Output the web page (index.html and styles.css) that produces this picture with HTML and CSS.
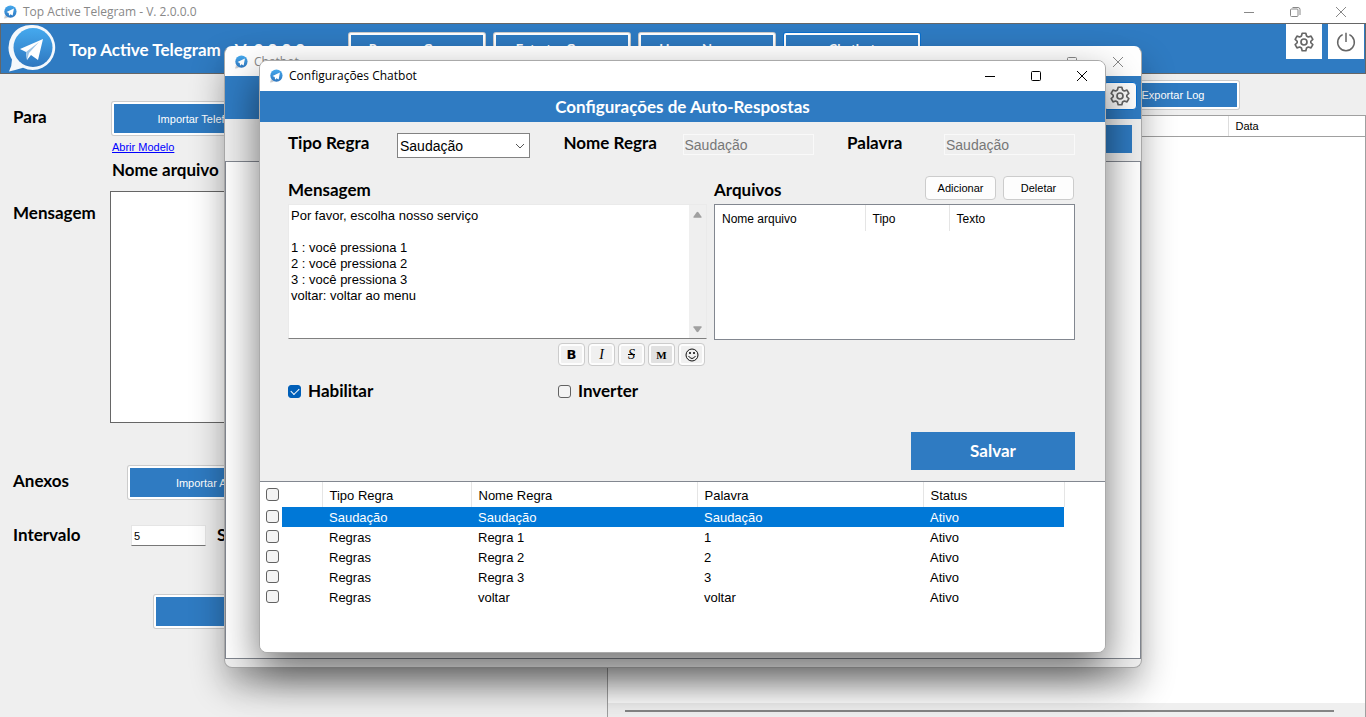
FILE: index.html
```html
<!DOCTYPE html>
<html lang="pt-BR">
<head>
	<meta charset="UTF-8">
	<title>Top Active Telegram</title>
	<link rel="stylesheet" href="styles.css">
</head>
<body>
<svg class="sprite" aria-hidden="true">
	<defs>
		<linearGradient id="sky" x1="0" y1="0" x2="0" y2="1">
			<stop offset="0" stop-color="#45a9ee"/>
			<stop offset="1" stop-color="#2f77bf"/>
		</linearGradient>
	</defs>
	<symbol id="logo" viewBox="0 0 48 48">
		<path d="M25 1a22.500 22.500 0 1 1-10 42.800Q8 46 1 47.500q3-6 3-12A22.500 22.500 0 0 1 25 1z" fill="#f4f8fc"/>
		<circle cx="25" cy="23.500" r="19.500" fill="url(#sky)"/>
		<path d="M35 15L12 25l6 3 1 8 4-5 7 5z" fill="#fff"/>
		<path d="M18 28l13-10-10 11-2 7z" fill="#9cc4e6"/>
	</symbol>
	<symbol id="smalllogo" viewBox="0 0 16 16">
		<path d="M1 15.500Q2.500 13 2 11.500l4 2.500Q4 15.500 1 15.500z" fill="#c9ccd0"/>
		<circle cx="8.500" cy="7.500" r="7" fill="url(#sky)"/>
		<path d="M12.500 4L4 8l2.500 1.200.5 3 1.500-1.700 2.500 1.500z" fill="#fff"/>
	</symbol>
	<symbol id="gear" viewBox="0 0 24 24">
		<path d="M9.800 1.500h4.400l.8 3.200 2.200 1.300 3.200-1 2.200 3.900-2.400 2.200v1.800l2.400 2.200-2.200 3.900-3.200-1-2.200 1.300-.8 3.200h-4.400L9 19.300 6.800 18l-3.200 1-2.200-3.900 2.400-2.200v-1.800L1.400 8.900 3.600 5l3.200 1L9 4.700z" fill="none" stroke="#666" stroke-width="2" stroke-linejoin="round"/>
		<circle cx="12" cy="12" r="3.600" fill="none" stroke="#666" stroke-width="2"/>
	</symbol>
	<symbol id="power" viewBox="0 0 24 24">
		<path d="M8 3.200a10 10 0 1 0 8 0M12 1v11" fill="none" stroke="#666" stroke-width="1.800"/>
	</symbol>
	<symbol id="min" viewBox="0 0 12 12"><path d="M1 6.500h10" fill="none" stroke="currentColor"/></symbol>
	<symbol id="max" viewBox="0 0 12 12"><rect x="1.500" y="1.500" width="9" height="9" rx="1" fill="none" stroke="currentColor"/></symbol>
	<symbol id="restore" viewBox="0 0 12 12"><path d="M1.500 4a1 1 0 0 1 1-1H8a1 1 0 0 1 1 1v5.500a1 1 0 0 1-1 1H2.500a1 1 0 0 1-1-1zM3.500 1.500H9a2 2 0 0 1 2 2V9" fill="none" stroke="currentColor"/></symbol>
	<symbol id="close" viewBox="0 0 12 12"><path d="M1 1l10 10M11 1L1 11" fill="none" stroke="currentColor"/></symbol>
</svg>

<!-- janela principal -->
<div class="main">
	<div class="titlebar inactive">
		<svg class="ico"><use href="#smalllogo"/></svg>
		<span class="caption">Top Active Telegram - V. 2.0.0.0</span>
		<button class="win" aria-label="Minimizar"><svg><use href="#min"/></svg></button>
		<button class="win" aria-label="Restaurar"><svg><use href="#restore"/></svg></button>
		<button class="win" aria-label="Fechar"><svg><use href="#close"/></svg></button>
	</div>
	<div class="topbar">
		<svg class="biglogo"><use href="#logo"/></svg>
		<h1>Top Active Telegram - V. 2.0.0.0</h1>
		<div class="menu">
			<button class="btn">Remover Grupos</button>
			<button class="btn">Extrator Grupos</button>
			<button class="btn">Limpar Numeros</button>
			<button class="btn current">Chatbot</button>
		</div>
		<div class="tools">
			<button class="tool" aria-label="Ajustes"><svg><use href="#gear"/></svg></button>
			<button class="tool" aria-label="Sair"><svg><use href="#power"/></svg></button>
		</div>
	</div>
	<div class="work">
		<div class="left">
			<div class="line">
				<span class="lbl">Para</span>
				<div class="stack">
					<button class="btn big">Importar Telefones</button>
					<a href="#">Abrir Modelo</a>
					<span class="lbl">Nome arquivo</span>
				</div>
			</div>
			<div class="line msg">
				<label class="lbl" for="texto">Mensagem</label>
				<textarea id="texto"></textarea>
			</div>
			<div class="line anexos">
				<span class="lbl">Anexos</span>
				<button class="btn big">Importar Arquivos</button>
			</div>
			<div class="line intervalo">
				<label class="lbl" for="seg">Intervalo</label>
				<input id="seg" type="text" value="5">
				<span class="lbl">Segundos</span>
			</div>
			<button class="btn big send">Enviar</button>
		</div>
		<div class="right">
			<div class="logbar"><button class="btn">Exportar Log</button></div>
			<div class="log">
				<table>
					<thead><tr><th></th><th class="data">Data</th></tr></thead>
				</table>
				<div class="hscroll"><i></i></div>
			</div>
		</div>
	</div>
</div>

<!-- janela chatbot -->
<div class="window chatbot">
	<div class="titlebar inactive">
		<svg class="ico"><use href="#smalllogo"/></svg>
		<span class="caption">Chatbot</span>
		<button class="win" aria-label="Minimizar"><svg><use href="#min"/></svg></button>
		<button class="win" aria-label="Maximizar"><svg><use href="#max"/></svg></button>
		<button class="win" aria-label="Fechar"><svg><use href="#close"/></svg></button>
	</div>
	<div class="bar"><button class="cfg" aria-label="Configurações"><svg><use href="#gear"/></svg></button></div>
	<div class="strip"><button class="flat" aria-label="Iniciar"></button></div>
	<div class="list"></div>
</div>

<!-- janela de configuracoes -->
<div class="window config">
	<div class="titlebar">
		<svg class="ico"><use href="#smalllogo"/></svg>
		<span class="caption">Configurações Chatbot</span>
		<button class="win" aria-label="Minimizar"><svg><use href="#min"/></svg></button>
		<button class="win" aria-label="Maximizar"><svg><use href="#max"/></svg></button>
		<button class="win" aria-label="Fechar"><svg><use href="#close"/></svg></button>
	</div>
	<h2>Configurações de Auto-Respostas</h2>
	<form class="form">
		<div class="fields">
			<div class="field tipo">
				<label class="lbl" for="tipo">Tipo Regra</label>
				<div class="combo">
					<select id="tipo"><option>Saudação</option><option>Regras</option></select>
					<svg viewBox="0 0 10 6"><path d="M1 1l4 4 4-4" fill="none" stroke="#555"/></svg>
				</div>
			</div>
			<div class="field nome">
				<label class="lbl" for="nome">Nome Regra</label>
				<input id="nome" type="text" value="Saudação" disabled>
			</div>
			<div class="field palavra">
				<label class="lbl" for="palavra">Palavra</label>
				<input id="palavra" type="text" value="Saudação" disabled>
			</div>
		</div>
		<div class="cols">
			<div class="col">
				<div class="head"><label class="lbl" for="mensagem">Mensagem</label></div>
				<div class="editor">
					<textarea id="mensagem">Por favor, escolha nosso serviço

1 : você pressiona 1
2 : você pressiona 2
3 : você pressiona 3
voltar: voltar ao menu</textarea>
					<div class="vscroll">
						<svg viewBox="0 0 10 7"><path d="M1 7h8q1 0 .5-1L6 1Q5 0 4 1L.5 6Q0 7 1 7z"/></svg>
						<svg viewBox="0 0 10 7"><path d="M1 0h8q1 0 .5 1L6 6Q5 7 4 6L.5 1Q0 0 1 0z"/></svg>
					</div>
				</div>
				<div class="format">
					<button type="button" class="b">B</button>
					<button type="button" class="i">I</button>
					<button type="button" class="s">S</button>
					<button type="button" class="m">M</button>
					<button type="button" aria-label="Emoji"><svg viewBox="0 0 14 14"><g fill="none" stroke="#111"><circle cx="7" cy="7" r="6"/><path d="M3.500 8q3.500 5 7 0"/></g><circle cx="5" cy="5" r="1"/><circle cx="9" cy="5" r="1"/></svg></button>
				</div>
			</div>
			<div class="col">
				<div class="head">
					<span class="lbl">Arquivos</span>
					<button type="button" class="small">Adicionar</button>
					<button type="button" class="small">Deletar</button>
				</div>
				<div class="files">
					<table>
						<thead><tr><th class="f1">Nome arquivo</th><th class="f2">Tipo</th><th>Texto</th></tr></thead>
					</table>
				</div>
			</div>
		</div>
		<div class="checks">
			<label class="lbl"><input type="checkbox" checked>Habilitar</label>
			<label class="lbl"><input type="checkbox">Inverter</label>
		</div>
		<div class="save"><button type="button">Salvar</button></div>
	</form>
	<div class="rules">
		<table>
			<colgroup><col class="c0"><col class="c1"><col class="c2"><col class="c3"><col class="c3"><col class="c4"></colgroup>
			<thead>
				<tr><th class="nb"><input type="checkbox" aria-label="Todos"></th><th></th><th>Tipo Regra</th><th>Nome Regra</th><th>Palavra</th><th>Status</th></tr>
			</thead>
			<tbody>
				<tr class="sel"><td><input type="checkbox" aria-label="Saudação"></td><td></td><td>Saudação</td><td>Saudação</td><td>Saudação</td><td>Ativo</td></tr>
				<tr><td><input type="checkbox" aria-label="Regra 1"></td><td></td><td>Regras</td><td>Regra 1</td><td>1</td><td>Ativo</td></tr>
				<tr><td><input type="checkbox" aria-label="Regra 2"></td><td></td><td>Regras</td><td>Regra 2</td><td>2</td><td>Ativo</td></tr>
				<tr><td><input type="checkbox" aria-label="Regra 3"></td><td></td><td>Regras</td><td>Regra 3</td><td>3</td><td>Ativo</td></tr>
				<tr><td><input type="checkbox" aria-label="voltar"></td><td></td><td>Regras</td><td>voltar</td><td>voltar</td><td>Ativo</td></tr>
			</tbody>
		</table>
	</div>
</div>
</body>
</html>
```
FILE: styles.css
```css
*{
	box-sizing: border-box;
}
html,body{
	height: 100%;
}
body{
	margin: 0;
	overflow: hidden;
	background: #efefef;
	color: #000;
	font: 11px/16px "Liberation Sans", Arial, sans-serif;
}
button,input,select,textarea{
	margin: 0;
	padding: 0;
	border: 0;
	border-radius: 0;
	font: inherit;
	color: inherit;
}
textarea{
	resize: none;
}
table{
	border-collapse: collapse;
	table-layout: fixed;
}
th{
	font-weight: normal;
	text-align: left;
}
h1,h2{
	margin: 0;
	color: #fff;
	font: bold 17px/20px "Century Gothic", Lato, sans-serif;
}
.sprite{
	position: absolute;
	width: 0;
	height: 0;
}
.lbl{
	font: bold 17px/20px "Century Gothic", Lato, sans-serif;
}

/* barra de titulo */
.titlebar{
	display: flex;
	align-items: center;
	flex: none;
	height: 30px;
	padding-left: 9px;
	background: #fff;
	font: 12px/16px "Open Sans", "Segoe UI", sans-serif;
}
.inactive{
	color: #888;
}
.ico{
	width: 14px;
	height: 14px;
	margin-right: 6px;
}
.caption{
	flex: 1;
}
.win{
	display: flex;
	align-items: center;
	justify-content: center;
	width: 46px;
	height: 100%;
	background: none;
}
.win svg{
	width: 12px;
	height: 12px;
}

.btn{
	background: #2f7bc2;
	border: 2px solid #fff;
	border-radius: 2px;
	box-shadow: 0 0 0 1px #ccc;
	color: #fff;
}

/* janela principal */
.main{
	display: flex;
	flex-direction: column;
	height: 100%;
}
.main > .titlebar{
	height: 23px;
	padding: 0 2px 0 3px;
}
.topbar{
	display: flex;
	flex: none;
	height: 51px;
	background: #2f7bc2;
	border: 1px solid #666;
}
.biglogo{
	width: 48px;
	height: 48px;
	margin-left: 7px;
}
.topbar h1{
	width: 280px;
	padding: 16px 0 0 13px;
	white-space: nowrap;
}
.menu{
	display: flex;
	flex: 1;
	gap: 9px;
	padding: 9px 0 0 13px;
}
.menu .btn{
	width: 136px;
	height: 32px;
	font: bold 13px/16px "Century Gothic", Lato, sans-serif;
}
.menu .current{
	box-shadow: 0 0 0 1px #0a6fce;
}
.tools{
	display: flex;
	gap: 6px;
	padding-right: 1px;
}
.tool{
	display: flex;
	align-items: center;
	justify-content: center;
	width: 36px;
	height: 35px;
	background: #fff;
}
.tool svg{
	width: 20px;
	height: 20px;
}
.work{
	display: flex;
	flex: 1;
	min-height: 0;
}
.left{
	width: 608px;
	padding: 28px 24px 0 13px;
	border-right: 1px solid #a0a0a0;
}
.line{
	display: flex;
}
.line > .lbl:first-child{
	width: 97px;
	flex: none;
}
.line > .lbl{
	padding-top: 5px;
}
.stack{
	display: flex;
	flex-direction: column;
	align-items: flex-start;
	padding-left: 2px;
}
.stack a{
	margin: 4px 0 5px;
	color: #00f;
}
.big{
	width: 182px;
	height: 33px;
}
.line > .msg,.msg{
	margin-top: 11px;
}
.msg > .lbl:first-child{
	padding-top: 12px;
}
.msg textarea{
	flex: 1;
	height: 232px;
	background: #fff;
	border: 1px solid #666;
}
.anexos{
	margin-top: 43px;
	gap: 18px;
}
.intervalo{
	margin-top: 26px;
	gap: 11px;
}
.intervalo .lbl:first-child{
	width: 107px;
}
.intervalo .lbl{
	padding-top: 0;
}
.intervalo input{
	width: 75px;
	height: 21px;
	padding: 0 2px;
	background: #fff;
	border: 1px solid #e5e5e5;
	border-bottom-color: #777;
}
.send{
	display: block;
	margin: 49px 0 0 141px;
}
.right{
	display: flex;
	flex: 1;
	flex-direction: column;
}
.logbar{
	display: flex;
	justify-content: flex-end;
	padding: 7px 127px 6px 0;
}
.logbar .btn{
	width: 132px;
	height: 28px;
}
.log{
	display: flex;
	flex: 1;
	flex-direction: column;
	justify-content: space-between;
	background: #fff;
	border: solid #a0a0a0;
	border-width: 1px 1px 0 0;
}
.log table{
	width: 100%;
}
.log th{
	height: 20px;
	padding: 0 7px;
	border-bottom: 1px solid #a0a0a0;
}
.log .data{
	width: 137px;
	border-left: 1px solid #ddd;
}
.hscroll{
	height: 14px;
	padding: 7px 31px 0 17px;
	background: #efefef;
}
.hscroll i{
	display: block;
	height: 2px;
	background: #858585;
}

/* janelas flutuantes */
.window{
	position: absolute;
	display: flex;
	flex-direction: column;
	overflow: hidden;
	border: 1px solid #aaa;
	border-radius: 8px;
	background: #efefef;
}
.chatbot{
	inset: 46px 224px 49px 224px;
	border-top-color: #fff;
	box-shadow: 0 18px 34px rgba(0,0,0,.32);
}
.chatbot .titlebar{
	height: 29px;
}
.config{
	inset: 60px 260px 64px 259px;
	box-shadow: 0 18px 40px rgba(0,0,0,.55);
}
.bar{
	display: flex;
	justify-content: flex-end;
	height: 43px;
	padding: 6px 4px;
	background: #2f7bc2;
}
.cfg{
	display: flex;
	align-items: center;
	justify-content: center;
	width: 34px;
	height: 28px;
	background: #fff;
	border: 1px solid #0a6fce;
	border-radius: 4px;
}
.cfg svg{
	width: 20px;
	height: 20px;
}
.strip{
	display: flex;
	justify-content: flex-end;
	height: 42px;
	padding: 6px 9px 8px;
}
.flat{
	width: 160px;
	background: #2f7bc2;
}
.list{
	flex: 1;
	margin-bottom: 8px;
	background: #fff;
	border: 1px solid #828790;
}
h2{
	flex: none;
	padding: 6px 0 5px;
	background: #2f7bc2;
	text-align: center;
}
.form{
	flex: none;
	padding: 11px 30px 11px 28px;
}
.fields{
	display: flex;
	justify-content: space-between;
}
.field{
	display: flex;
}
.tipo .lbl{
	width: 109px;
}
.nome .lbl{
	width: 119px;
}
.palavra .lbl{
	width: 97px;
}
.field input{
	width: 131px;
	height: 21px;
	margin-top: 1px;
	padding: 0 1px;
	background: #efefef;
	border: 1px solid #f9f9f9;
	color: #777;
	font-size: 14px;
}
.combo{
	display: flex;
	align-items: center;
	width: 133px;
	height: 25px;
	padding-right: 4px;
	background: #fff;
	border: 1px solid #828282;
}
.combo select{
	flex: 1;
	padding-left: 2px;
	appearance: none;
	background: none;
	font-size: 14px;
}
.combo svg{
	width: 10px;
	height: 6px;
}
.cols{
	display: grid;
	grid-template-columns: 419fr 361fr;
	gap: 7px;
	padding-top: 18px;
}
.head{
	display: flex;
	gap: 7px;
	height: 28px;
	padding-right: 1px;
}
.head .lbl{
	flex: 1;
	padding-top: 4px;
}
.small{
	width: 71px;
	height: 24px;
	background: #fdfdfd;
	border: 1px solid #ccc;
	border-radius: 4px;
}
.editor{
	display: flex;
	height: 135px;
	background: #fff;
	border: 1px solid #eaeaea;
	border-bottom-color: #808080;
}
.editor textarea{
	flex: 1;
	padding: 3px 2px;
	overflow: hidden;
	background: none;
	font-size: 13px;
}
.vscroll{
	display: flex;
	flex-direction: column;
	align-items: center;
	justify-content: space-between;
	width: 17px;
	padding: 6px 0 5px;
	background: #efefef;
}
.vscroll svg{
	width: 9px;
	height: 7px;
	fill: #a0a0a0;
}
.format{
	display: flex;
	gap: 3px;
	justify-content: flex-end;
	padding: 4px 2px 0;
}
.format button{
	display: flex;
	align-items: center;
	justify-content: center;
	width: 27px;
	height: 23px;
	background: #f0f0f0;
	border: 1px solid #ccc;
	border-radius: 4px;
	box-shadow: inset 0 0 0 2px #fdfdfd;
	font-size: 13px;
}
.format svg{
	width: 14px;
	height: 14px;
}
.format .b{
	font-family: "DejaVu Sans", sans-serif;
	font-weight: bold;
}
.format .i,.format .s{
	font-family: "Liberation Serif", serif;
	font-style: italic;
	font-size: 14px;
}
.format .s{
	text-decoration: line-through;
}
.format .m{
	background: #e1e1e1;
	font-family: "Liberation Serif", serif;
	font-weight: bold;
	font-size: 11px;
}
.files{
	height: 136px;
	background: #fff;
	border: 1px solid #828790;
	font-size: 12px;
}
.files table{
	width: 100%;
}
.files th{
	height: 26px;
	padding: 1px 6px 0 7px;
}
.files .f1{
	width: 150px;
}
.files .f2{
	width: 84px;
}
.f1,.f2{
	border-right: 1px solid #e5e5e5;
}
.checks{
	display: grid;
	grid-template-columns: 270px 1fr;
	padding-top: 15px;
}
.checks label{
	display: flex;
	align-items: center;
	gap: 7px;
}
input[type=checkbox]{
	appearance: none;
	flex: none;
	width: 13px;
	height: 13px;
	background: #f3f3f3;
	border: 1px solid #626262;
	border-radius: 3px;
}
input[type=checkbox]:checked{
	display: flex;
	align-items: center;
	justify-content: center;
	background: #005fb8;
	border-color: #005fb8;
}
input[type=checkbox]:checked::before{
	content: "";
	width: 7px;
	height: 4px;
	margin-bottom: 2px;
	border: solid #fff;
	border-width: 0 0 1px 1px;
	transform: rotate(-45deg);
}
.save{
	display: flex;
	justify-content: flex-end;
	padding-top: 31px;
}
.save button{
	width: 164px;
	height: 38px;
	background: #2f7bc2;
	color: #fff;
	font: bold 17px/20px "Century Gothic", Lato, sans-serif;
}
.rules{
	flex: 1;
	background: #fff;
	border-top: 1px solid #828790;
	font-size: 13px;
}
.c0{ width: 22px; }
.c1{ width: 40px; }
.c2{ width: 149px; }
.c3{ width: 226px; }
.c4{ width: 141px; }
.rules table{
	width: 804px;
}
.rules th{
	height: 25px;
	padding: 2px 6px 0 7px;
	border-right: 1px solid #e5e5e5;
}
.rules td{
	height: 20px;
	padding: 2px 6px 0 7px;
}
.rules td:first-child,.rules .nb{
	padding: 0 0 1px 6px;
	border: 0;
}
.rules input{
	display: block;
}
.sel td{
	background: #0078d7;
	color: #fff;
}
.sel td:first-child{
	background: #fff;
}
```
